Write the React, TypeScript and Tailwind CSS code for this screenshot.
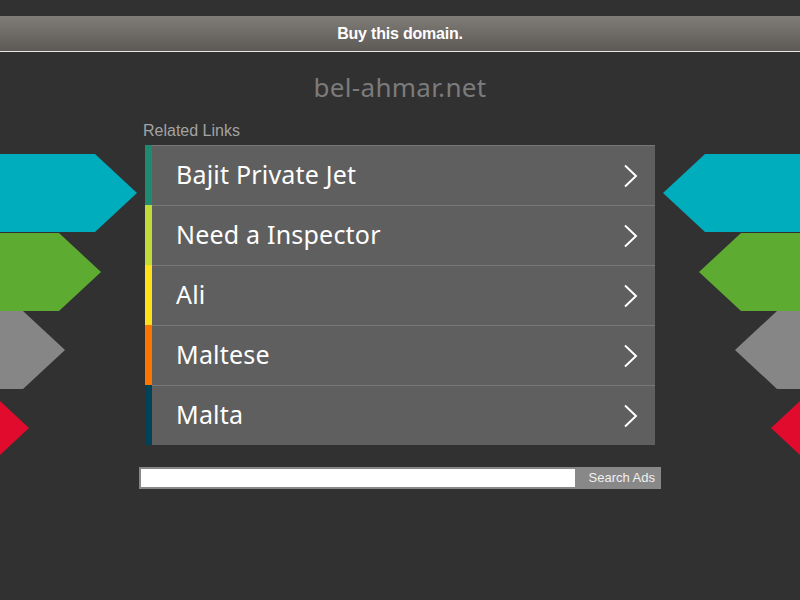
const LINKS = [
  { label: 'Bajit Private Jet', color: 'bg-[#1f8a70]' },
  { label: 'Need a Inspector', color: 'bg-[#bedb39]' },
  { label: 'Ali', color: 'bg-[#ffe11a]' },
  { label: 'Maltese', color: 'bg-[#fd7400]' },
  { label: 'Malta', color: 'bg-[#004358]' },
];

// arrow shapes: [rect edge x, top y] – height 78, tip 42 wide
const ARROWS = [
  { x: 95, y: 154, fill: '#00adbd' },
  { x: 59, y: 233, fill: '#5dab31' },
  { x: 23, y: 311, fill: '#868686' },
  { x: -13, y: 389, fill: '#e00b2d' },
];

function Arrows({ side }: { side: 'left' | 'right' }) {
  return (
    <svg
      width="145"
      height="600"
      viewBox="0 0 145 600"
      className={`absolute top-0 ${side === 'left' ? 'left-0' : 'right-0 -scale-x-100'}`}
    >
      {ARROWS.map((a) => (
        <polygon
          key={a.y}
          fill={a.fill}
          points={`-20,${a.y} ${a.x},${a.y} ${a.x + 42},${a.y + 39} ${a.x},${a.y + 78} -20,${a.y + 78}`}
        />
      ))}
    </svg>
  );
}

function Chevron() {
  return (
    <svg width="16" height="24" viewBox="0 0 16 24" fill="none">
      <path d="M2 1.5 L13 12 L2 22.5" stroke="white" strokeWidth="2" />
    </svg>
  );
}

export default function App() {
  return (
    <div className="relative h-[600px] w-[800px] overflow-hidden bg-[#313131] font-['Liberation_Sans',sans-serif]">
      <Arrows side="left" />
      <Arrows side="right" />

      <div className="pt-4">
        <div className="flex h-9 items-center justify-center border-b border-[#e8e8e8] bg-gradient-to-b from-[#807c78] to-[#5d5955]">
          <span className="text-[16px] font-bold tracking-[-0.2px] text-white">Buy this domain.</span>
        </div>
      </div>

      <h1 className="mt-[19px] text-center font-['Noto_Sans',sans-serif] text-[26px] leading-[32px] tracking-[0.3px] text-[#7b7b7b]">
        bel-ahmar.net
      </h1>

      <div className="relative mx-auto mt-[18px] w-[510px]">
        <p className="-ml-[2px] text-[16px] leading-[20px] text-[#a3a3a3]">Related Links</p>
        <div className="mt-[4px]">
          {LINKS.map((l) => (
            <div key={l.label} className="flex h-[60px] border-t border-[#777] bg-[#5f5f5f]">
              <div className={`w-[7px] -mt-px ${l.color}`} />
              <span className="flex-1 pl-[24px] font-['Noto_Sans',sans-serif] text-[25px] leading-[56px] tracking-[0.2px] text-white">
                {l.label}
              </span>
              <div className="flex items-center pr-[16px]">
                <Chevron />
              </div>
            </div>
          ))}
        </div>
      </div>

      <div className="mx-auto mt-[22px] flex h-[22px] w-[522px] bg-[#888]">
        <div className="m-[2px] mr-[1px] flex-1 bg-white" />
        <span className="pl-[13px] pr-[6px] text-[13px] leading-[22px] text-[#f0f0f0]">Search Ads</span>
      </div>
    </div>
  );
}
